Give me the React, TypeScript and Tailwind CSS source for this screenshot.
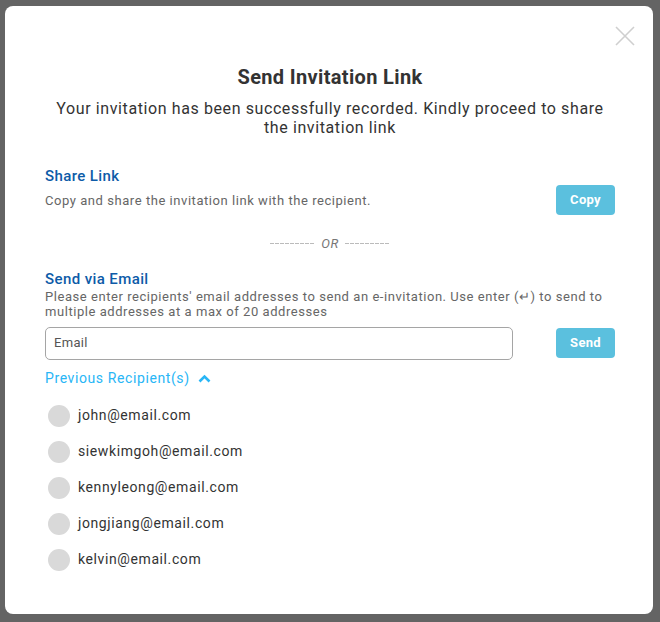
import React from "react";

const emails = [
  "john@email.com",
  "siewkimgoh@email.com",
  "kennyleong@email.com",
  "jongjiang@email.com",
  "kelvin@email.com",
];

export default function App() {
  return (
    <div
      className="w-[660px] h-[622px] bg-[#646464] pt-[6px] pl-[5px]"
      style={{ fontFamily: "Roboto, 'Noto Sans', sans-serif" }}
    >
      <div className="relative w-[648px] h-[608px] bg-white rounded-[8px] pl-10 pr-[38px] pt-[59px]">
        <button className="absolute right-[17px] top-[19px] w-[22px] h-[22px]" aria-label="close">
          <svg viewBox="0 0 22 22" width="22" height="22">
            <path d="M2 2 L20 20 M20 2 L2 20" stroke="#cfcfcf" strokeWidth="1.6" fill="none" />
          </svg>
        </button>
        <h2 className="text-center text-[20px] leading-[24px] font-bold text-[#333] tracking-[0.35px]">
          Send Invitation Link
        </h2>
        <p className="mt-[10px] text-center text-[16px] leading-[19px] text-[#333] tracking-[0.6px] px-1">
          Your invitation has been successfully recorded. Kindly proceed to share the invitation link
        </p>

        <div className="mt-[30px] flex items-end justify-between">
          <div>
            <div className="text-[15px] leading-[18px] font-medium text-[#0d5ba8] tracking-[0.4px]">Share Link</div>
            <div className="mt-[8px] text-[13px] leading-[16px] text-[#666] tracking-[0.55px]">
              Copy and share the invitation link with the recipient.
            </div>
          </div>
          <button className="mb-[-6px] w-[59px] h-[30px] rounded-[4px] bg-[#5bc0de] text-white text-[13px] font-bold tracking-[0.3px]">
            Copy
          </button>
        </div>

        <div className="mt-[25px] flex items-center justify-center gap-[6px] text-[13px] text-[#777] italic tracking-[0.5px]">
          <span className="w-[45px] h-px bg-[repeating-linear-gradient(90deg,#bbb_0_4px,transparent_4px_5px)]" />
          <span>OR</span>
          <span className="w-[45px] h-px bg-[repeating-linear-gradient(90deg,#bbb_0_4px,transparent_4px_5px)]" />
        </div>

        <div className="mt-[16px] text-[15px] leading-[18px] font-medium text-[#0d5ba8] tracking-[0.4px]">Send via Email</div>
        <div className="mt-[1px] text-[13px] leading-[15px] text-[#666] tracking-[0.55px]">
          Please enter recipients' email addresses to send an e-invitation. Use enter (↵) to send to multiple addresses at a max of 20 addresses
        </div>

        <div className="mt-[8px] flex items-center justify-between">
          <div className="w-[468px] h-[33px] border border-[#a5a5a5] rounded-[5px] flex items-center px-[8px] text-[13px] text-[#555] tracking-[0.3px]">
            Email
          </div>
          <button className="mt-[-1px] w-[59px] h-[30px] rounded-[4px] bg-[#5bc0de] text-white text-[13px] font-bold tracking-[0.3px]">
            Send
          </button>
        </div>

        <div className="mt-[8px] flex items-center gap-[8px] text-[14px] text-[#29b6f6] tracking-[0.6px]">
          <span>Previous Recipient(s)</span>
          <svg viewBox="0 0 13 9" width="13" height="9">
            <path d="M1.5 7.5 L6.5 2.5 L11.5 7.5" stroke="#29b6f6" strokeWidth="2.6" fill="none" />
          </svg>
        </div>

        <div className="mt-[16px] flex flex-col gap-[14px]">
          {emails.map((e) => (
            <div key={e} className="flex items-center h-[22px]">
              <div className="w-[22px] h-[22px] rounded-full bg-[#d9d9d9] ml-[3px]" />
              <span className="ml-[8px] text-[14px] text-[#333] tracking-[0.6px]">{e}</span>
            </div>
          ))}
        </div>
      </div>
    </div>
  );
}
